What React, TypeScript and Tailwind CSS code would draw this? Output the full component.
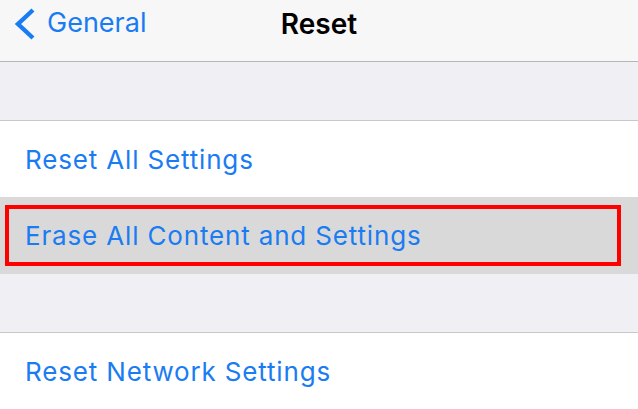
import React from "react";

const font = { fontFamily: "Inter, 'Liberation Sans', Arial, sans-serif" };

function Row({ label, highlighted }: { label: string; highlighted?: boolean }) {
  return (
    <div className={`flex items-center ${highlighted ? "h-[77px] bg-[#d9d9d9] px-[5px]" : "h-[76px] bg-white pl-[25px]"}`}>
      {highlighted ? (
        <div className="flex-1 mr-[12px] h-[61px] border-[4px] border-[#ff0000] flex items-center pl-[16px]">
          <span className="text-[26px] text-[#1a7cf2] tracking-[0.84px]">{label}</span>
        </div>
      ) : (
        <span className="text-[26px] text-[#1a7cf2] tracking-[0.84px]">{label}</span>
      )}
    </div>
  );
}

export default function App() {
  return (
    <div className="w-[638px] h-[409px] overflow-hidden bg-[#efeff4]" style={font}>
      <div className="h-[62px] bg-[#f7f7f8] border-b border-[#b5b5b8] relative flex items-center justify-center">
        <div className="absolute left-[13px] top-0 h-[61px] flex items-center">
          <svg width="24" height="34" viewBox="0 0 24 34" className="mt-[-14px]">
            <path d="M20 3 L5 17 L20 31" fill="none" stroke="#1a7cf2" strokeWidth="4.4" strokeLinecap="butt" strokeLinejoin="miter" />
          </svg>
          <span className="ml-[10px] text-[27px] text-[#1a7cf2] mt-[-14px]">General</span>
        </div>
        <span className="text-[28px] font-semibold text-black mt-[-14px]">Reset</span>
      </div>
      <div className="h-[58px]" />
      <div className="border-t border-[#c8c7cc]">
        <Row label="Reset All Settings" />
        <Row label="Erase All Content and Settings" highlighted />
      </div>
      <div className="h-[58px]" />
      <div className="border-t border-[#c8c7cc]">
        <Row label="Reset Network Settings" />
      </div>
    </div>
  );
}
